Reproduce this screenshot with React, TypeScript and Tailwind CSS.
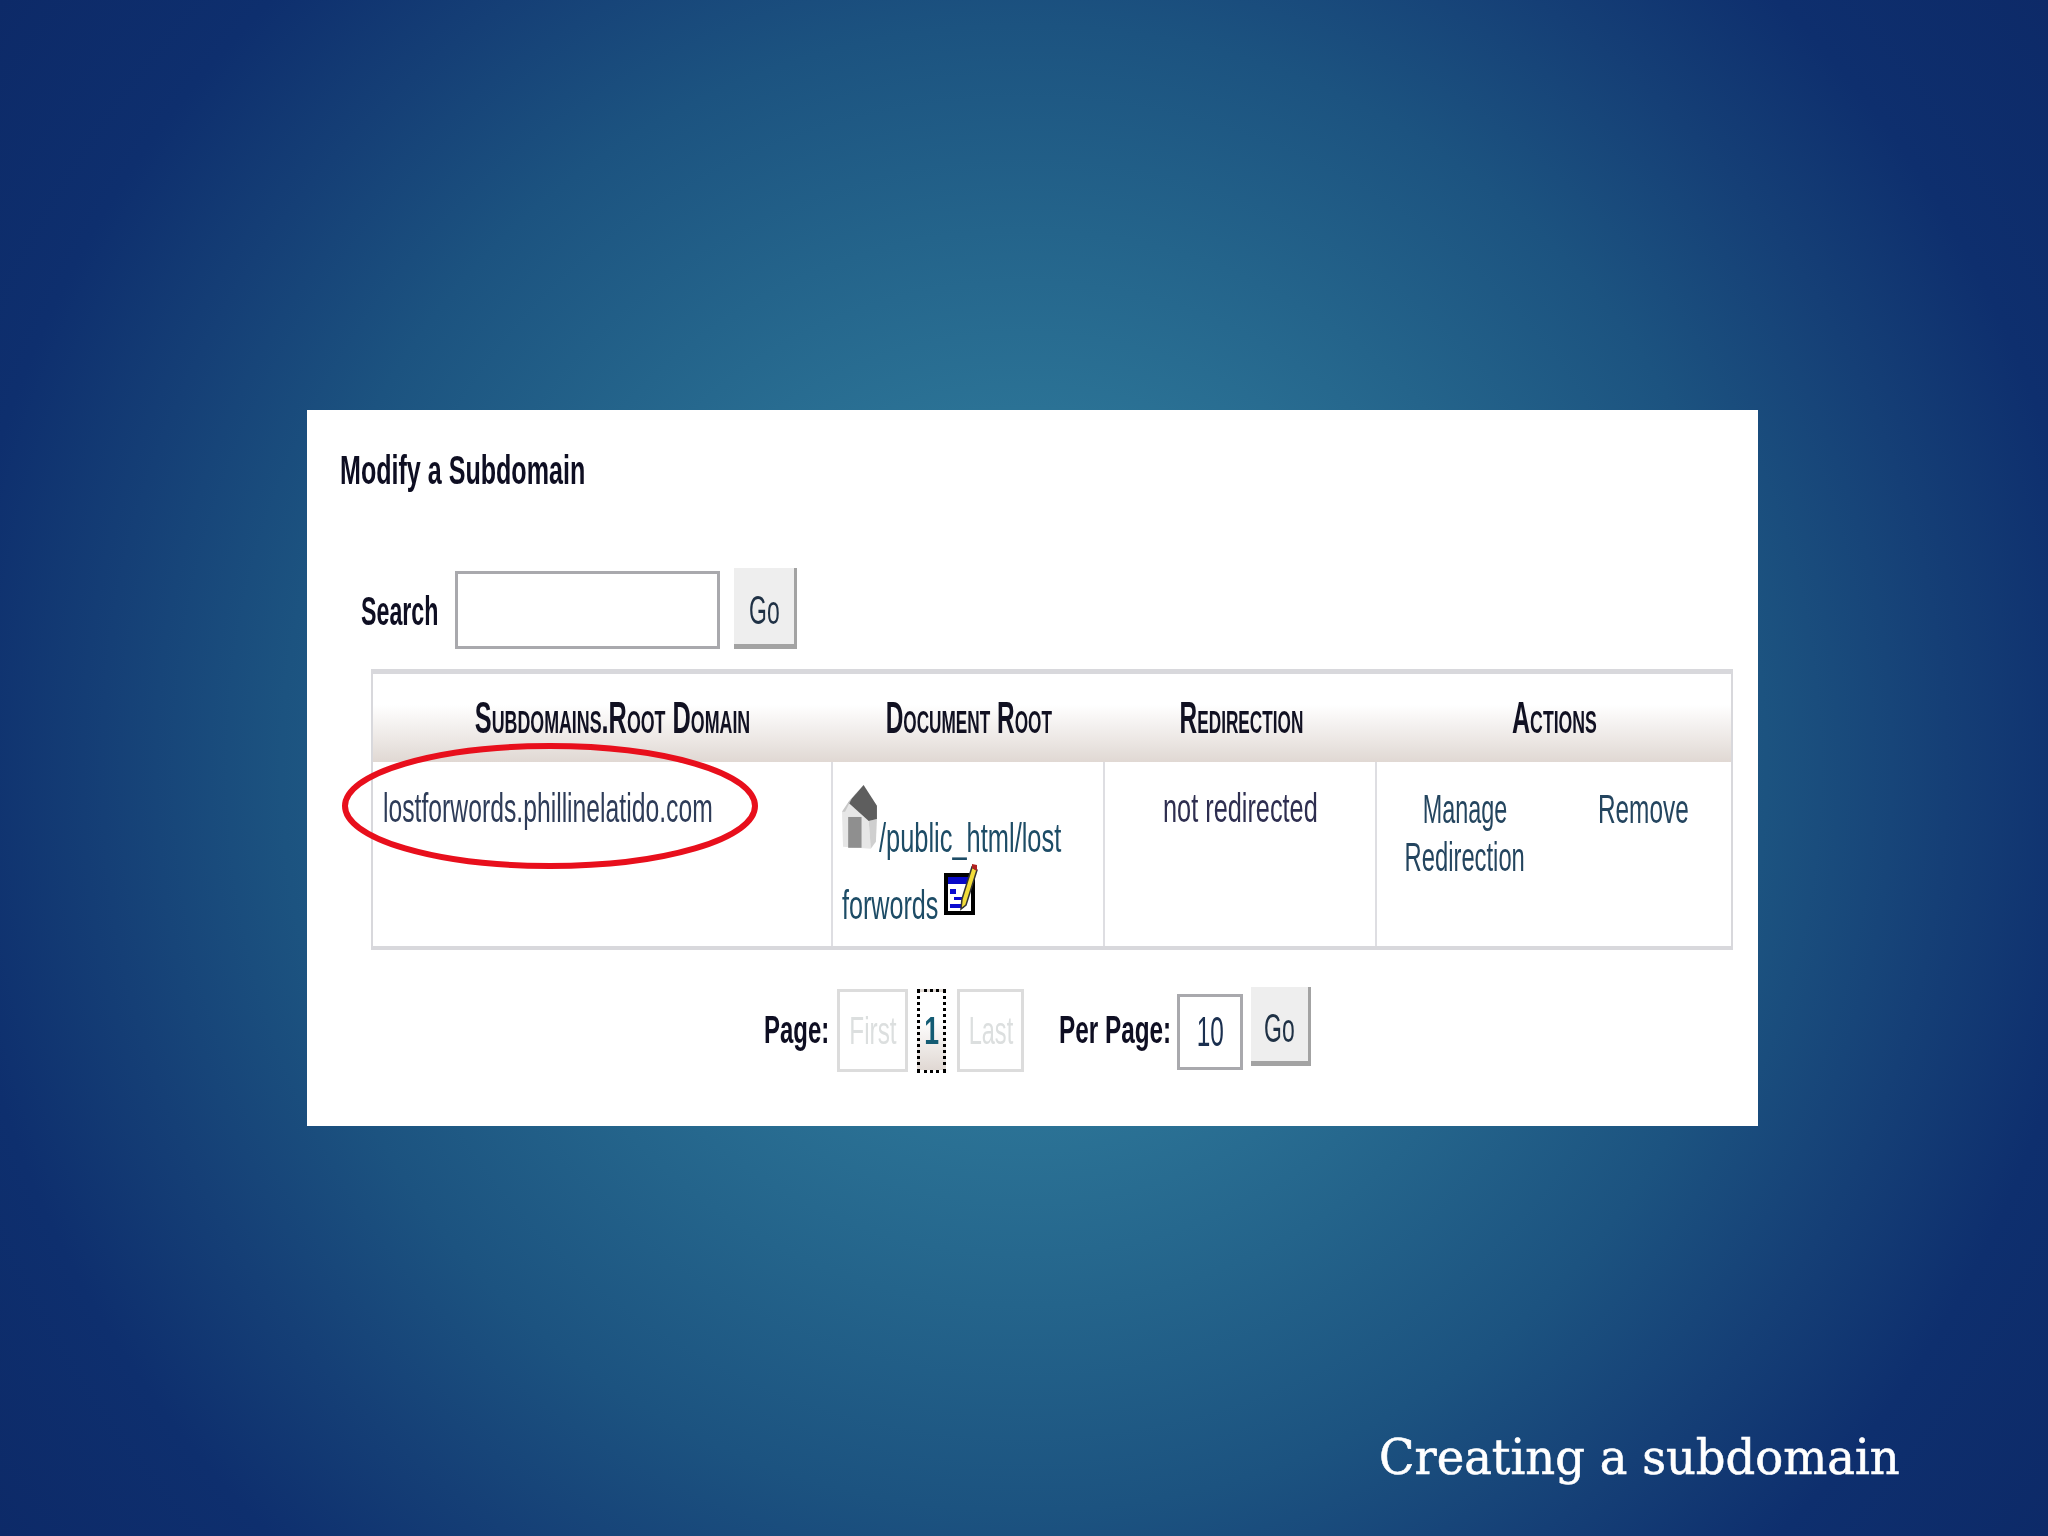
import React from "react";

const sans = "[font-family:'Liberation_Sans',sans-serif]";

function House() {
  return (
    <svg width="37" height="68" viewBox="0 0 36 64" className="shrink-0 mb-[3px]">
      <path d="M0 26 L6 17 L26 35 L28 62 L1 60 Z" fill="#e6e6e6" />
      <path d="M26 35 L34 33 L33 55 L28 62 Z" fill="#cfcfcf" />
      <path d="M6 17 L21 0 L34 20 L34 33 L26 35 Z" fill="#5e5e5e" />
      <path d="M0 26 L6 17 L21 0 L10 12 L3 26 Z" fill="#c8c8c8" />
      <rect x="6" y="31" width="13" height="30" fill="#8f8f8f" />
    </svg>
  );
}

function Note() {
  return (
    <svg width="34" height="53" viewBox="0 0 34 53" className="shrink-0">
      <rect x="2" y="12" width="27" height="38" fill="#fff" stroke="#000" strokeWidth="4" />
      <rect x="4" y="14" width="23" height="7" fill="#0808c8" />
      <rect x="6" y="26" width="6" height="5" fill="#0a0ad0" />
      <rect x="10" y="34" width="10" height="3" fill="#0a0ad0" />
      <rect x="6" y="41" width="14" height="4" fill="#0a0ad0" />
      <path d="M28 4 L33 7 L22 42 L17 46 L18 36 Z" fill="#f2dc3a" stroke="#333" strokeWidth="1.5" />
      <path d="M28 1 L33 2 L33 8 L28 5 Z" fill="#b02020" />
    </svg>
  );
}

function Oval() {
  return (
    <svg width="420" height="126" viewBox="0 0 420 126" className="absolute left-[-32px] top-[-19px] z-10">
      <ellipse cx="209" cy="63" rx="205" ry="60" fill="none" stroke="#e80f1c" strokeWidth="6" />
    </svg>
  );
}

function GoButton({ size }: { size: "a" | "b" }) {
  return (
    <div
      className={`flex items-center justify-center pt-[9px] bg-[#eeeeee] border-r-[3px] border-b-[5px] border-[#a3a3a3] ${
        size === "a" ? "w-[63px] h-[81px]" : "w-[60px] h-[79px]"
      }`}
    >
      <span className={`inline-block whitespace-nowrap scale-x-[0.56] text-[41px] leading-none text-[#1f3145] ${sans}`}>Go</span>
    </div>
  );
}

function HeaderCell({ w, scale, children }: { w: string; scale: string; children: string }) {
  return (
    <div className={`flex items-center justify-center ${w}`}>
      <span
        className={`inline-block whitespace-nowrap font-bold text-[44px] leading-none text-[#111122] [font-variant:small-caps] ${sans} ${scale}`}
      >
        {children}
      </span>
    </div>
  );
}

export default function App() {
  return (
    <div className="relative w-[2048px] h-[1536px] overflow-hidden bg-[radial-gradient(circle_1280px_at_50%_50%,#2f7a9b_0%,#2f7a9b_20%,#24648b_42%,#1c5380_58%,#153f76_72%,#0e2f6e_84%,#0d2a68_100%)]">
      <div className="flex flex-col h-full pt-[410px] pl-[307px]">
        {/* Panel */}
        <div className="flex flex-col w-[1451px] h-[716px] shrink-0 bg-white blur-[0.5px]">
          <div className="h-[120px] pl-[33px] pt-[36px]">
            <span className={`block origin-left whitespace-nowrap scale-x-[0.627] font-bold text-[40px] leading-[48px] text-[#0e0e22] ${sans}`}>
              Modify a Subdomain
            </span>
          </div>

          <div className="flex items-center h-[81px] mt-[38px] pl-[54px]">
            <div className="w-[94px] pt-[5px]">
              <span className={`block origin-left whitespace-nowrap scale-x-[0.58] font-bold text-[40px] leading-none text-[#0e0e22] ${sans}`}>
                Search
              </span>
            </div>
            <div className="w-[265px] h-[78px] mt-[2px] border-[3px] border-[#a9a9ad] bg-white" />
            <div className="ml-[14px]">
              <GoButton size="a" />
            </div>
          </div>

          {/* Table */}
          <div className="ml-[64px] mt-[20px] w-[1362px] h-[281px] flex flex-col border-t-[5px] border-b-[4px] border-x-2 border-[#d8d8dc]">
            <div className="flex h-[88px] shrink-0 bg-[linear-gradient(to_bottom,#ffffff_0%,#ffffff_35%,#e0d8d3_100%)]">
              <HeaderCell w="w-[460px] pl-[18px]" scale="scale-x-[0.575]">Subdomains.Root Domain</HeaderCell>
              <HeaderCell w="w-[272px]" scale="scale-x-[0.555]">Document Root</HeaderCell>
              <HeaderCell w="w-[272px]" scale="scale-x-[0.555]">Redirection</HeaderCell>
              <HeaderCell w="w-[354px]" scale="scale-x-[0.57]">Actions</HeaderCell>
            </div>
            <div className="flex flex-1">
              <div className="relative w-[460px] pl-[10px] pt-[23px] border-r-2 border-[#dedee2]">
                <Oval />
                <span className={`block origin-left whitespace-nowrap scale-x-[0.603] text-[41px] leading-[46px] text-[#2e3c58] ${sans}`}>
                  lostforwords.phillinelatido.com
                </span>
              </div>
              <div className="w-[272px] pl-[9px] pt-[19px] border-r-2 border-[#dedee2]">
                <div className="flex items-end h-[74px]">
                  <House />
                  <span className={`block origin-left whitespace-nowrap scale-x-[0.62] text-[41px] leading-[46px] -mb-[6px] text-[#1d4c66] ${sans}`}>
                    /public_html/lost
                  </span>
                </div>
                <div className="flex items-end h-[61px]">
                  <div className="w-[102px] -mb-[12px]">
                    <span className={`block origin-left whitespace-nowrap scale-x-[0.613] text-[41px] leading-[46px] text-[#1d4c66] ${sans}`}>
                      forwords
                    </span>
                  </div>
                  <Note />
                </div>
              </div>
              <div className="w-[272px] pt-[23px] flex justify-center border-r-2 border-[#dedee2]">
                <span className={`block h-[46px] whitespace-nowrap scale-x-[0.617] text-[41px] leading-[46px] text-[#2e2e50] ${sans}`}>
                  not redirected
                </span>
              </div>
              <div className="w-[354px] pt-[23px] flex">
                <div className="w-[176px] flex flex-col items-center">
                  <span className={`block whitespace-nowrap scale-x-[0.57] text-[41px] leading-[48px] text-[#24455f] ${sans}`}>Manage</span>
                  <span className={`block whitespace-nowrap scale-x-[0.58] text-[41px] leading-[48px] text-[#24455f] ${sans}`}>Redirection</span>
                </div>
                <div className="w-[178px] flex justify-center h-[48px] pl-[2px]">
                  <span className={`block whitespace-nowrap scale-x-[0.595] text-[41px] leading-[48px] text-[#24455f] ${sans}`}>Remove</span>
                </div>
              </div>
            </div>
          </div>

          {/* Pagination */}
          <div className="flex items-center mt-[37px] pl-[457px] h-[87px]">
            <div className="w-[73px] -mt-[2px]">
              <span className={`block origin-left whitespace-nowrap scale-x-[0.63] font-bold text-[38px] leading-none text-[#0e0e22] ${sans}`}>Page:</span>
            </div>
            <div className="w-[71px] h-[83px] flex items-center justify-center border-[3px] border-[#dcdcdc]">
              <span className={`inline-block scale-x-[0.64] text-[38px] leading-none text-[#dcdfdf] ${sans}`}>First</span>
            </div>
            <div className="ml-[9px] w-[29px] h-[84px] flex items-center justify-center border-[3px] border-dotted border-black bg-[linear-gradient(to_bottom,#ffffff_0%,#ffffff_35%,#e0d8d3_100%)]">
              <span className={`inline-block scale-x-[0.7] font-bold text-[38px] leading-none text-[#135b73] ${sans}`}>1</span>
            </div>
            <div className="ml-[11px] w-[67px] h-[83px] flex items-center justify-center border-[3px] border-[#dcdcdc]">
              <span className={`inline-block scale-x-[0.62] text-[38px] leading-none text-[#dcdfdf] ${sans}`}>Last</span>
            </div>
            <div className="ml-[35px] w-[118px] -mt-[2px]">
              <span className={`block origin-left whitespace-nowrap scale-x-[0.64] font-bold text-[38px] leading-none text-[#0e0e22] ${sans}`}>Per Page:</span>
            </div>
            <div className="w-[66px] h-[76px] mt-[2px] flex items-center justify-center border-[3px] border-[#a9a9ad]">
              <span className={`inline-block scale-x-[0.58] text-[42px] leading-none text-[#1b3050] ${sans}`}>10</span>
            </div>
            <div className="ml-[8px] -mt-[8px]">
              <GoButton size="b" />
            </div>
          </div>
        </div>

        {/* Caption */}
        <div className="mt-[301px] pl-[1072px] h-[60px] flex items-center">
          <span className="block origin-left whitespace-nowrap scale-x-[0.967] text-[48px] leading-none text-white [-webkit-text-stroke:0.6px_white] [font-family:'DejaVu_Serif',serif]">
            Creating a subdomain
          </span>
        </div>
      </div>
    </div>
  );
}
